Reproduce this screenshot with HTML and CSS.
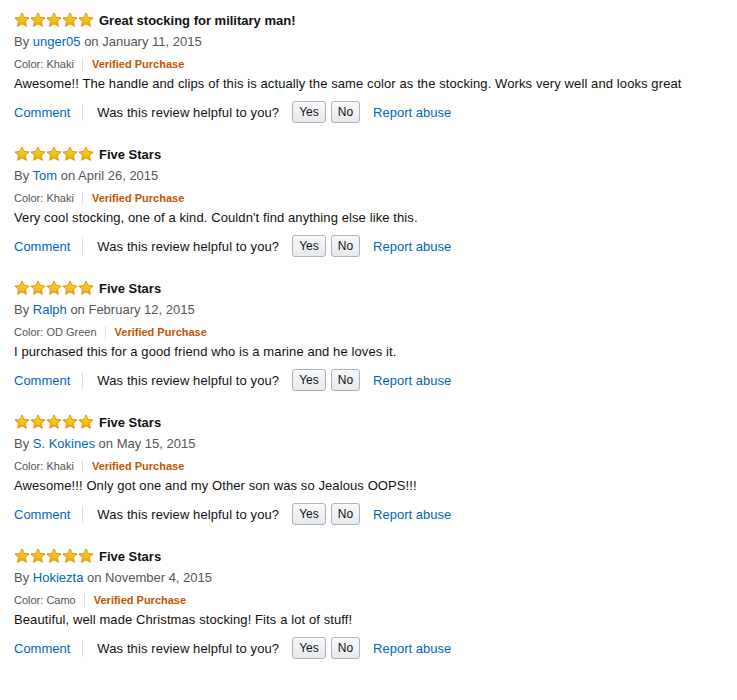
FILE: index.html
```html
<!DOCTYPE html>
<html>
<head>
<meta charset="utf-8">
<link rel="stylesheet" href="styles.css">
</head>
<body>
<svg width="0" height="0" class="defs">
  <defs>
    <linearGradient id="g" x1="0" y1="0" x2="0" y2="1">
      <stop offset="0" stop-color="#ffd83a"/>
      <stop offset="1" stop-color="#f5a800"/>
    </linearGradient>
    <symbol id="star" viewBox="0 0 16 16">
      <path d="M8 0.9 L10.1 5.5 L15.1 6 L11.3 9.3 L12.4 14.3 L8 11.7 L3.6 14.3 L4.7 9.3 L0.9 6 L5.9 5.5 Z" fill="url(#g)" stroke="#d88a00" stroke-width="0.9" stroke-linejoin="round"/>
    </symbol>
  </defs>
</svg>
<div class="reviews">
  <div class="review">
    <div class="title-row">
      <span class="stars"><svg><use href="#star"/></svg><svg><use href="#star"/></svg><svg><use href="#star"/></svg><svg><use href="#star"/></svg><svg><use href="#star"/></svg></span>
      <span class="title">Great stocking for military man!</span>
    </div>
    <div class="byline">By <a class="link">unger05</a> on January 11, 2015</div>
    <div class="meta"><span class="color">Color: Khaki</span><span class="verified">Verified Purchase</span></div>
    <div class="body">Awesome!! The handle and clips of this is actually the same color as the stocking. Works very well and looks great</div>
    <div class="actions"><a class="link">Comment</a><span class="helpful">Was this review helpful to you?</span><button class="btn">Yes</button><button class="btn">No</button><a class="link report">Report abuse</a></div>
  </div>
  <div class="review">
    <div class="title-row">
      <span class="stars"><svg><use href="#star"/></svg><svg><use href="#star"/></svg><svg><use href="#star"/></svg><svg><use href="#star"/></svg><svg><use href="#star"/></svg></span>
      <span class="title">Five Stars</span>
    </div>
    <div class="byline">By <a class="link">Tom</a> on April 26, 2015</div>
    <div class="meta"><span class="color">Color: Khaki</span><span class="verified">Verified Purchase</span></div>
    <div class="body">Very cool stocking, one of a kind. Couldn't find anything else like this.</div>
    <div class="actions"><a class="link">Comment</a><span class="helpful">Was this review helpful to you?</span><button class="btn">Yes</button><button class="btn">No</button><a class="link report">Report abuse</a></div>
  </div>
  <div class="review">
    <div class="title-row">
      <span class="stars"><svg><use href="#star"/></svg><svg><use href="#star"/></svg><svg><use href="#star"/></svg><svg><use href="#star"/></svg><svg><use href="#star"/></svg></span>
      <span class="title">Five Stars</span>
    </div>
    <div class="byline">By <a class="link">Ralph</a> on February 12, 2015</div>
    <div class="meta"><span class="color">Color: OD Green</span><span class="verified">Verified Purchase</span></div>
    <div class="body">I purchased this for a good friend who is a marine and he loves it.</div>
    <div class="actions"><a class="link">Comment</a><span class="helpful">Was this review helpful to you?</span><button class="btn">Yes</button><button class="btn">No</button><a class="link report">Report abuse</a></div>
  </div>
  <div class="review">
    <div class="title-row">
      <span class="stars"><svg><use href="#star"/></svg><svg><use href="#star"/></svg><svg><use href="#star"/></svg><svg><use href="#star"/></svg><svg><use href="#star"/></svg></span>
      <span class="title">Five Stars</span>
    </div>
    <div class="byline">By <a class="link">S. Kokines</a> on May 15, 2015</div>
    <div class="meta"><span class="color">Color: Khaki</span><span class="verified">Verified Purchase</span></div>
    <div class="body">Awesome!!! Only got one and my Other son was so Jealous OOPS!!!</div>
    <div class="actions"><a class="link">Comment</a><span class="helpful">Was this review helpful to you?</span><button class="btn">Yes</button><button class="btn">No</button><a class="link report">Report abuse</a></div>
  </div>
  <div class="review">
    <div class="title-row">
      <span class="stars"><svg><use href="#star"/></svg><svg><use href="#star"/></svg><svg><use href="#star"/></svg><svg><use href="#star"/></svg><svg><use href="#star"/></svg></span>
      <span class="title">Five Stars</span>
    </div>
    <div class="byline">By <a class="link">Hokiezta</a> on November 4, 2015</div>
    <div class="meta"><span class="color">Color: Camo</span><span class="verified">Verified Purchase</span></div>
    <div class="body">Beautiful, well made Christmas stocking! Fits a lot of stuff!</div>
    <div class="actions"><a class="link">Comment</a><span class="helpful">Was this review helpful to you?</span><button class="btn">Yes</button><button class="btn">No</button><a class="link report">Report abuse</a></div>
  </div>
</div>
</body>
</html>
```
FILE: styles.css
```css
html, body {
  margin: 0;
  padding: 0;
  background: #fff;
}
body {
  font-family: "Liberation Sans", Arial, sans-serif;
  font-size: 13px;
  color: #111;
}
.defs {
  position: absolute;
  width: 0;
  height: 0;
}
.reviews {
  padding: 10px 14px 0 14px;
}
.review {
  padding-bottom: 21px;
}
.title-row {
  display: flex;
  align-items: center;
  height: 20px;
}
.stars {
  display: flex;
  margin-right: 5px;
}
.stars svg {
  width: 16px;
  height: 16px;
  display: block;
}
.title {
  font-weight: bold;
  font-size: 13px;
  color: #111;
}
.byline {
  margin-top: 2px;
  line-height: 20px;
  color: #555;
}
.link {
  color: #0066c0;
  text-decoration: none;
}
.meta {
  margin-top: 4px;
  height: 16px;
  display: flex;
  align-items: center;
  font-size: 11px;
}
.color {
  color: #555;
  padding-right: 8px;
  border-right: 1px solid #ddd;
  line-height: 13px;
}
.verified {
  color: #c45500;
  font-weight: bold;
  padding-left: 9px;
}
.body {
  margin-top: 2px;
  line-height: 19px;
  letter-spacing: 0.1px;
}
.actions {
  margin-top: 8px;
  height: 22px;
  display: flex;
  align-items: center;
}
.actions > .link:first-child {
  padding-right: 12px;
  border-right: 1px solid #ddd;
  line-height: 17px;
}
.helpful {
  padding-left: 14px;
  margin-right: 13px;
  letter-spacing: 0.1px;
}
.btn {
  font-family: "Liberation Sans", Arial, sans-serif;
  font-size: 12px;
  color: #111;
  height: 22px;
  padding: 0 6px;
  margin: 0 5px 0 0;
  border: 1px solid #adb1b8;
  border-radius: 3px;
  background: linear-gradient(#f7f8fa, #e7e9ec);
  box-shadow: inset 0 1px 0 rgba(255,255,255,0.6);
}
.report {
  margin-left: 8px;
}
```
